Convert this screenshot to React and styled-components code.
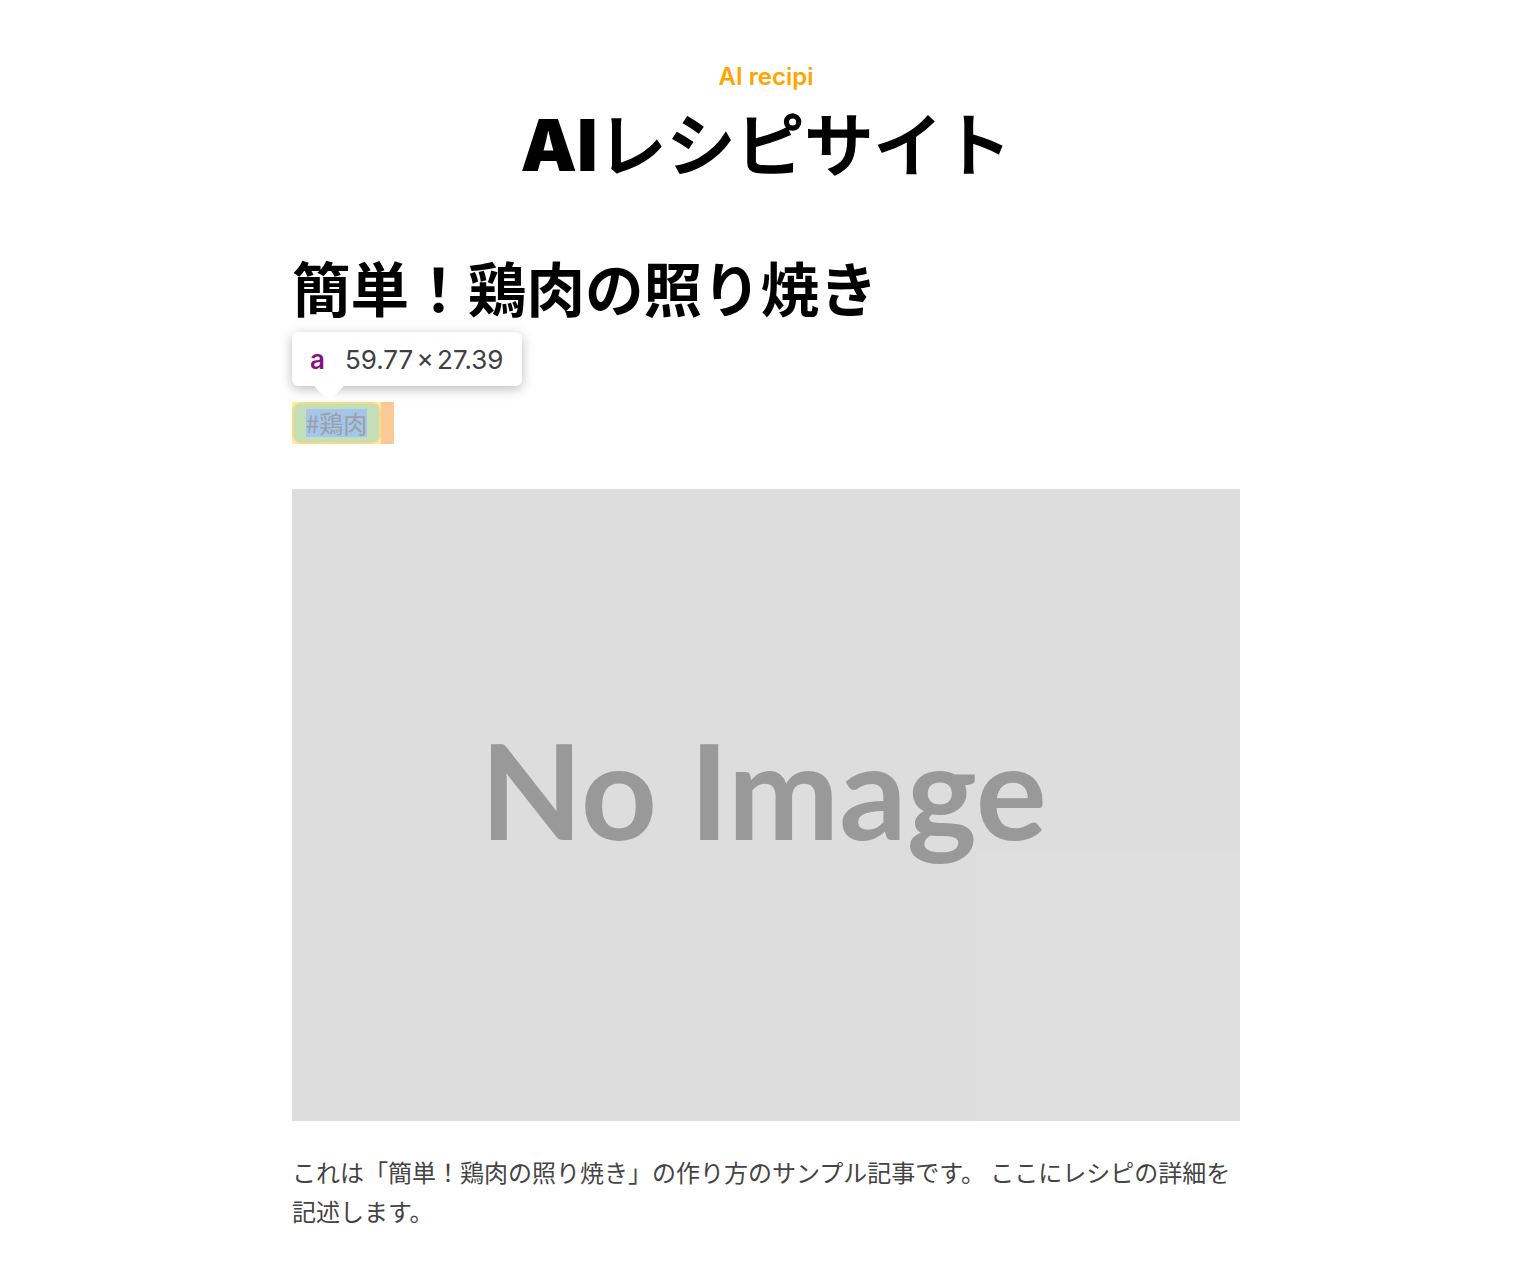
import React from "react";
import styled, { createGlobalStyle } from "styled-components";

const Global = createGlobalStyle`
  html, body {
    margin: 0;
    padding: 0;
    background: #fff;
    font-family: Inter, "Noto Sans CJK JP", sans-serif;
  }
`;

const Page = styled.div`
  width: 948px;
  margin-left: 292px;
  padding-top: 62px;
  padding-bottom: 30px;
`;

const Header = styled.header`
  text-align: center;
`;

const Brand = styled.p`
  margin: 0;
  color: #ffa500;
  font-family: Inter, sans-serif;
  font-size: 24px;
  font-weight: 600;
  line-height: 30px;
`;

const SiteTitle = styled.h1`
  margin: 0;
  color: #000;
  font-family: "Noto Sans CJK JP", sans-serif;
  font-size: 69px;
  font-weight: 500;
  line-height: 98px;
  -webkit-text-stroke: 1.5px #000;
`;

const TitleLatin = styled.span`
  font-family: Inter, sans-serif;
  font-size: 71px;
  font-weight: 900;
  letter-spacing: 0;
  -webkit-text-stroke: 0;
`;

const ArticleTitle = styled.h2`
  margin: 50px 0 0;
  color: #000;
  font-family: "Noto Sans CJK JP", sans-serif;
  font-size: 58.6px;
  font-weight: 700;
  line-height: 86px;
`;

const TagRow = styled.div`
  position: relative;
  display: flex;
  margin-top: 72px;
  height: 42px;
`;

const TagMargin = styled.div`
  display: flex;
  width: 102px;
  height: 42px;
  background: linear-gradient(to right, #fbeea6 89px, #f9c998 89px);
`;

const Tag = styled.a`
  box-sizing: border-box;
  display: flex;
  align-items: center;
  width: 89px;
  height: 42px;
  padding: 6px 12px;
  border: 2px solid #fbd982;
  border-radius: 9px;
  background: #c4dfb8;
  color: #9aa0a6;
  font-family: "Noto Sans CJK JP", sans-serif;
  font-size: 24px;
  text-decoration: none;
  white-space: nowrap;
`;

const TagContent = styled.span`
  display: block;
  width: 62px;
  height: 28px;
  line-height: 28px;
  background: #a3c6ea;
`;

const Tooltip = styled.div`
  position: absolute;
  left: 0;
  bottom: 58px;
  box-sizing: border-box;
  display: flex;
  align-items: center;
  gap: 20px;
  width: 230px;
  height: 54px;
  padding: 0 18px;
  background: #fff;
  border-radius: 6px;
  box-shadow: 0 3px 12px rgba(60, 64, 67, 0.35);
  font-family: Inter, sans-serif;
  font-size: 26px;
  color: #3c4043;

  &::after {
    content: "";
    position: absolute;
    left: 21px;
    bottom: -15px;
    border-left: 16px solid transparent;
    border-right: 16px solid transparent;
    border-top: 16px solid #fff;
  }
`;

const TagName = styled.span`
  color: #881280;
  font-weight: 600;
`;

const Size = styled.span`
  white-space: nowrap;
  word-spacing: -4px;
`;

const Thumb = styled.div`
  position: relative;
  box-sizing: border-box;
  display: flex;
  align-items: center;
  justify-content: center;
  margin-top: 45px;
  height: 632px;
  padding-right: 5px;
  padding-bottom: 34px;
  background: #dddddd;
  overflow: hidden;

  &::after {
    content: "";
    position: absolute;
    right: 0;
    bottom: 0;
    width: 264px;
    height: 272px;
    background: #dfdfdf;
  }
`;

const ThumbLabel = styled.span`
  position: relative;
  z-index: 1;
  color: #999999;
  font-family: Lato, sans-serif;
  font-size: 133px;
  font-weight: 700;
  line-height: 1;
  filter: blur(0.6px);
`;

const Body = styled.p`
  margin: 31px 0 0;
  color: #444444;
  font-family: "Noto Sans CJK JP", sans-serif;
  font-size: 24px;
  line-height: 39px;
`;

export default function App() {
  return (
    <>
      <Global />
      <Page>
        <Header>
          <Brand>AI recipi</Brand>
          <SiteTitle>
            <TitleLatin>AI</TitleLatin>レシピサイト
          </SiteTitle>
        </Header>
        <ArticleTitle>簡単！鶏肉の照り焼き</ArticleTitle>
        <TagRow>
          <TagMargin>
            <Tag href="#">
              <TagContent>#鶏肉</TagContent>
            </Tag>
          </TagMargin>
          <Tooltip>
            <TagName>a</TagName>
            <Size>59.77 × 27.39</Size>
          </Tooltip>
        </TagRow>
        <Thumb>
          <ThumbLabel>No Image</ThumbLabel>
        </Thumb>
        <Body>
          これは「簡単！鶏肉の照り焼き」の作り方のサンプル記事です。 ここにレシピの詳細を記述します。
        </Body>
      </Page>
    </>
  );
}
